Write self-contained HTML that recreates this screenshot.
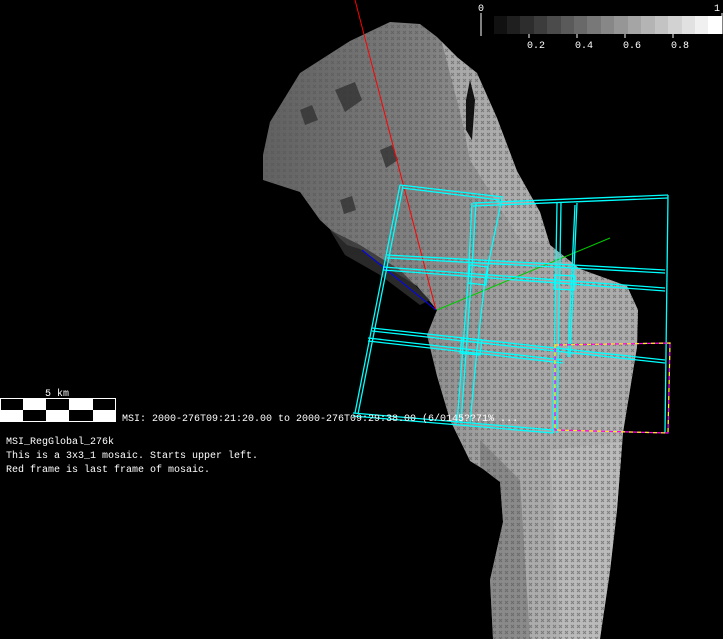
<!DOCTYPE html>
<html><head><meta charset="utf-8"><style>
html,body{margin:0;padding:0;background:#000;width:723px;height:639px;overflow:hidden}
svg{display:block}
text{font-family:"Liberation Mono","DejaVu Sans Mono",monospace;font-size:10px;fill:#fff}
</style></head><body>
<svg width="723" height="639" viewBox="0 0 723 639" xmlns="http://www.w3.org/2000/svg">
<defs>
<linearGradient id="g1" x1="0" y1="0" x2="1" y2="0.2">
<stop offset="0" stop-color="#5a5a5a"/><stop offset="0.45" stop-color="#808080"/><stop offset="0.7" stop-color="#a2a2a2"/><stop offset="1" stop-color="#b4b4b4"/>
</linearGradient>
<pattern id="tx" width="6" height="6" patternUnits="userSpaceOnUse">
<path d="M1,1 L4,4 M4,1 L1,4" stroke="#555" stroke-width="1" opacity="0.6"/>
</pattern>
<clipPath id="bc"><path id="bodyp" d="M263,155 L270,122 L300,73 L350,41 L390,22 L420,24 L437,37 L457,57 L477,73 L497,118 L517,171 L540,212 L550,245 L580,269 L627,286 L638,310 L637,347 L627,408 L623,433 L617,510 L610,571 L600,639 L493,639 L490,580 L503,522 L500,482 L483,469 L470,461 L450,420 L437,376 L427,335 L437,310 L417,286 L383,265 L360,249 L347,245 L320,220 L300,192 L263,180 Z"/></clipPath>
</defs>
<rect width="723" height="639" fill="#000"/>
<g clip-path="url(#bc)">
<rect x="250" y="0" width="400" height="639" fill="url(#g1)"/>
<path d="M440,35 L457,57 L477,73 L497,118 L517,171 L540,212 L550,245 L520,240 L495,200 L470,160 L462,120 Z" fill="#b0b0b0" opacity="0.8"/>
<path d="M540,240 L640,286 L640,420 L560,420 L540,330 Z" fill="#a8a8a8" opacity="0.6"/>
<path d="M480,440 L520,480 L530,639 L480,639 Z" fill="#777" opacity="0.6"/>
<path d="M550,450 L640,440 L640,639 L560,639 Z" fill="#c0c0c0" opacity="0.6"/>
<rect x="250" y="0" width="400" height="639" fill="url(#tx)"/>
</g>
<path d="M470,80 L475,100 L472,140 L466,130 L466,100 Z" fill="#111"/>
<g fill="#333" opacity="0.8">
<path d="M335,90 L355,82 L362,100 L345,112 Z"/>
<path d="M380,150 L392,145 L398,160 L386,168 Z"/>
<path d="M300,110 L312,105 L318,120 L305,125 Z"/>
<path d="M340,200 L352,196 L356,210 L344,214 Z"/>
<path d="M330,230 L360,245 L400,270 L430,300 L420,305 L380,275 L345,255 Z"/>
</g>
<!-- colorbar -->
<g>
<rect x="494" y="16" width="14" height="18" fill="#111"/>
<rect x="507" y="16" width="14" height="18" fill="#1f1f1f"/>
<rect x="520" y="16" width="14" height="18" fill="#2d2d2d"/>
<rect x="534" y="16" width="14" height="18" fill="#3c3c3c"/>
<rect x="547" y="16" width="14" height="18" fill="#4b4b4b"/>
<rect x="561" y="16" width="14" height="18" fill="#5a5a5a"/>
<rect x="574" y="16" width="14" height="18" fill="#696969"/>
<rect x="587" y="16" width="14" height="18" fill="#787878"/>
<rect x="601" y="16" width="14" height="18" fill="#878787"/>
<rect x="614" y="16" width="14" height="18" fill="#969696"/>
<rect x="628" y="16" width="14" height="18" fill="#a5a5a5"/>
<rect x="641" y="16" width="14" height="18" fill="#b4b4b4"/>
<rect x="655" y="16" width="14" height="18" fill="#c3c3c3"/>
<rect x="668" y="16" width="14" height="18" fill="#d2d2d2"/>
<rect x="682" y="16" width="14" height="18" fill="#e1e1e1"/>
<rect x="695" y="16" width="14" height="18" fill="#f0f0f0"/>
<rect x="708" y="16" width="14" height="18" fill="#fff"/>
<line x1="481" y1="13" x2="481" y2="36" stroke="#fff"/>
<line x1="722" y1="13" x2="722" y2="34" stroke="#fff"/>
<g stroke="#fff"><line x1="529" y1="34" x2="529" y2="38"/><line x1="577" y1="34" x2="577" y2="38"/><line x1="625" y1="34" x2="625" y2="38"/><line x1="673" y1="34" x2="673" y2="38"/></g>
<text x="478" y="11">0</text><text x="714" y="11">1</text>
<text x="527" y="48">0.2</text><text x="575" y="48">0.4</text><text x="623" y="48">0.6</text><text x="671" y="48">0.8</text>
</g>
<line x1="355" y1="0" x2="436" y2="310" stroke="#f00"/>
<line x1="437" y1="310" x2="610" y2="238" stroke="#0c0"/>
<line x1="362" y1="250" x2="436" y2="310" stroke="#00f"/>
<g stroke="#0ff" fill="none" stroke-width="1.3">
<path d="M400,185 L355,413 M403,186 L358,414"/>
<path d="M400,185 L503,197 M402,188 L500,200"/>
<path d="M502,198 L485,280 L477,350 L470,423"/>
<path d="M472,203 L468,283 L457,423 M476,203 L471,283 L461,423"/>
<path d="M473,203 L668,195 M473,206 L668,198"/>
<path d="M668,195 L665,433"/>
<path d="M557,203 L553,433 M561,203 L557,433"/>
<path d="M577,203 L570,357 M575,205 L568,357"/>
<path d="M387,255 L665,270 M387,258 L665,273"/>
<path d="M383,267 L665,288 M383,270 L665,291"/>
<path d="M372,328 L665,360 M372,331 L665,363"/>
<path d="M368,338 L563,360 M368,341 L563,363"/>
<path d="M353,413 L553,430 M353,416 L553,433"/>
<path d="M470,265 L488,267 L486,285 L468,283 Z"/>
<path d="M555,275 L575,276 L574,290 L554,289 Z"/>
<path d="M462,338 L482,340 L480,355 L460,353 Z"/>
</g>
<path d="M555,345 L670,343 L668,433 L555,430 Z" fill="none" stroke="#f0f" stroke-width="1.2"/>
<path d="M555,345 L670,343 L668,433 L555,430 Z" fill="none" stroke="#ff0" stroke-width="1.2" stroke-dasharray="4 4"/>
<rect x="0" y="398" width="116" height="24" fill="#fff"/>
<g fill="#000">
<rect x="1" y="399" width="22" height="11"/><rect x="46" y="399" width="23" height="11"/><rect x="93" y="399" width="22" height="11"/>
<rect x="23" y="410" width="23" height="11"/><rect x="69" y="410" width="24" height="11"/>
</g>
<text x="45" y="396">5 km</text>
<text x="122" y="421">MSI:  2000-276T09:21:20.00 to 2000-276T09:29:38.00 (6/0145??71% ...</text>
<text x="6" y="444">MSI_RegGlobal_276k</text>
<text x="6" y="458">This is a 3x3_1 mosaic. Starts upper left.</text>
<text x="6" y="472">Red frame is last frame of mosaic.</text>
</svg>
</body></html>
